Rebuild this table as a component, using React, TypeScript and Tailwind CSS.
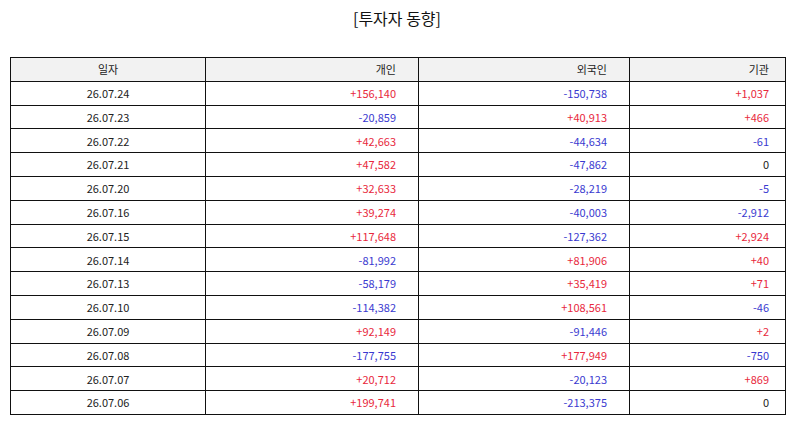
const rows: [string, string, string, string][] = [
  ['26.07.24', '+156,140', '-150,738', '+1,037'],
  ['26.07.23', '-20,859', '+40,913', '+466'],
  ['26.07.22', '+42,663', '-44,634', '-61'],
  ['26.07.21', '+47,582', '-47,862', '0'],
  ['26.07.20', '+32,633', '-28,219', '-5'],
  ['26.07.16', '+39,274', '-40,003', '-2,912'],
  ['26.07.15', '+117,648', '-127,362', '+2,924'],
  ['26.07.14', '-81,992', '+81,906', '+40'],
  ['26.07.13', '-58,179', '+35,419', '+71'],
  ['26.07.10', '-114,382', '+108,561', '-46'],
  ['26.07.09', '+92,149', '-91,446', '+2'],
  ['26.07.08', '-177,755', '+177,949', '-750'],
  ['26.07.07', '+20,712', '-20,123', '+869'],
  ['26.07.06', '+199,741', '-213,375', '0'],
];

function tone(v: string) {
  if (v.startsWith('+')) return 'text-[#e8283c]';
  if (v.startsWith('-')) return 'text-[#3a3ad0]';
  return 'text-[#222]';
}

const cell = 'border-[1.5px] border-[#111]';

export default function App() {
  return (
    <div
      className="w-[794px] h-[425px] bg-white px-[10px] pt-[7px]"
      style={{ fontFamily: '"Noto Sans CJK KR", "Noto Sans", sans-serif' }}
    >
      <h1 className="text-center text-[16px] leading-[22px] text-[#111] h-[50px]">[투자자 동향]</h1>
      <table className="w-[775px] border-collapse table-fixed text-[11px] text-[#222]">
        <colgroup>
          <col className="w-[195px]" />
          <col className="w-[213px]" />
          <col className="w-[211px]" />
          <col className="w-[156px]" />
        </colgroup>
        <thead>
          <tr className="h-[23.8px] bg-[#f2f2f2]">
            <th className={`${cell} font-normal text-center`}>일자</th>
            <th className={`${cell} font-normal text-right pr-[22px]`}>개인</th>
            <th className={`${cell} font-normal text-right pr-[22px]`}>외국인</th>
            <th className={`${cell} font-normal text-right pr-[16px]`}>기관</th>
          </tr>
        </thead>
        <tbody>
          {rows.map((r) => (
            <tr key={r[0]} className="h-[23.8px]">
              <td className={`${cell} text-center`}>{r[0]}</td>
              <td className={`${cell} text-right pr-[22px] ${tone(r[1])}`}>{r[1]}</td>
              <td className={`${cell} text-right pr-[22px] ${tone(r[2])}`}>{r[2]}</td>
              <td className={`${cell} text-right pr-[16px] ${tone(r[3])}`}>{r[3]}</td>
            </tr>
          ))}
        </tbody>
      </table>
    </div>
  );
}
